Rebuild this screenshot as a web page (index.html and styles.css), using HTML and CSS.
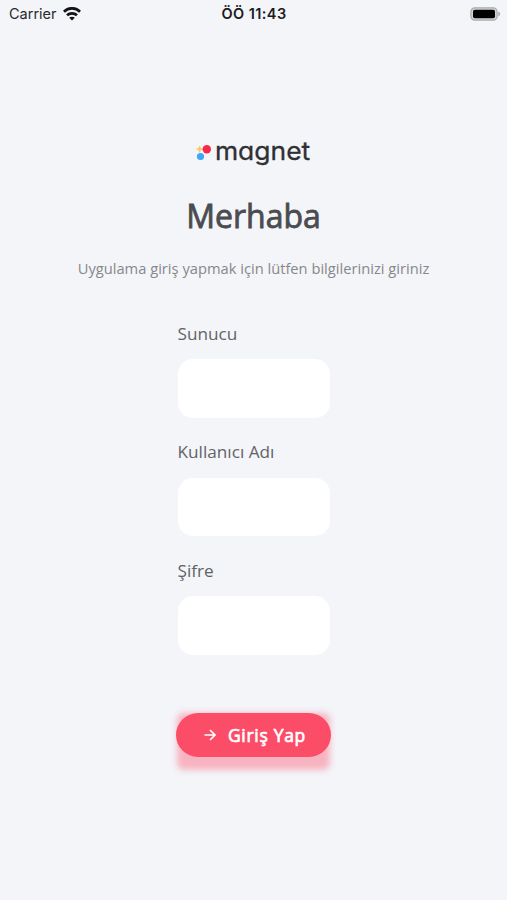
FILE: index.html
```html
<!DOCTYPE html>
<html lang="tr">
<head>
<meta charset="utf-8">
<meta name="viewport" content="width=device-width, initial-scale=1">
<title>Magnet</title>
<link rel="stylesheet" href="styles.css">
</head>
<body>
<header class="status">
  <div class="status-left">
    <span class="carrier">Carrier</span>
    <svg class="wifi" width="18" height="14" viewBox="0 0 18 14" fill="none" stroke="#141416" stroke-width="2.7">
      <path d="M.9 4.7C5.4.2 12.6.2 17.1 4.7"/>
      <path d="M4 8.3c2.8-2.7 7.2-2.7 10 0"/>
      <path d="M9 13.6 6.2 10.7c1.6-1.4 4-1.4 5.6 0z" fill="#141416" stroke="none"/>
    </svg>
  </div>
  <span class="time">ÖÖ 11:43</span>
  <svg class="battery" width="31" height="14" viewBox="0 0 31 14">
    <rect x=".9" y=".9" width="26.2" height="12.2" rx="3.8" fill="#d4d4d7" stroke="#a9a9ac" stroke-width="1.2"/>
    <rect x="3" y="2.8" width="22" height="8.4" rx="1.8" fill="#000"/>
    <path d="M28.4 4.6c2.3.8 2.3 4 0 4.8z" fill="#a9a9ac"/>
  </svg>
</header>
<main class="login">
  <svg class="logo" width="116" height="34" viewBox="0 0 116 34">
    <path d="M3.6 6.4 4.8 9l2.7 1.1-2.7 1.2-1.2 2.6-1.2-2.6L-.3 10.1 2.4 9z" fill="#ffc65c"/>
    <circle cx="10.8" cy="10.2" r="4.2" fill="#fb2748"/>
    <circle cx="4.5" cy="17.5" r="3.6" fill="#3fa7f5"/>
    <text class="wordmark" x="18.9" y="20.6" textLength="95.4" lengthAdjust="spacingAndGlyphs">magnet</text>
  </svg>
  <h1 class="title">Merhaba</h1>
  <p class="subtitle">Uygulama giriş yapmak için lütfen bilgilerinizi giriniz</p>
  <form class="form">
    <label class="field"><span class="label">Sunucu</span><input class="input" type="text"></label>
    <label class="field"><span class="label">Kullanıcı Adı</span><input class="input" type="text"></label>
    <label class="field"><span class="label">Şifre</span><input class="input" type="password"></label>
    <button class="submit" type="button">
      <svg width="12" height="12" viewBox="0 0 12 12" fill="none" stroke="#fff" stroke-width="1.6"><path d="M.5 6h10M6 1l5 5-5 5"/></svg>
      <span class="submit-text">Giriş Yap</span>
    </button>
  </form>
</main>
</body>
</html>
```
FILE: styles.css
```css
* { box-sizing: border-box; }
body {
  margin: 0;
  height: 900px;
  overflow: hidden;
  background: #f3f5f9;
  font-family: "Open Sans", sans-serif;
}
.status {
  display: grid;
  grid-template-columns: 1fr auto 1fr;
  align-items: center;
  height: 27px;
  padding: 0 6px 0 9px;
  font-family: Inter, sans-serif;
  font-size: 14.5px;
  color: #29292c;
}
.status-left { display: flex; align-items: center; gap: 6px; }
.time { margin-left: -2px; font-weight: 600; letter-spacing: .42px; color: #1b1b1e; }
.battery { justify-self: end; }
.login {
  display: flex;
  flex-direction: column;
  align-items: center;
}
.logo { margin-top: 112px; overflow: visible; }
.wordmark {
  font: 400 25px Inter, sans-serif;
  font-feature-settings: "cv11" 1;
  fill: #303034;
  stroke: #303034;
  stroke-width: .3px;
  stroke-linejoin: round;
}
.title {
  margin: 21px 0 0;
  height: 44px;
  line-height: 44px;
  font-size: 32px;
  font-weight: 400;
  color: #4b4c4f;
  -webkit-text-stroke: .8px #4b4c4f;
}
.subtitle {
  margin: 20px 0 0;
  height: 20px;
  line-height: 20px;
  font-size: 14.7px;
  color: #87888b;
  white-space: nowrap;
}
.form { width: 152px; margin-top: 43.5px; }
.field { display: block; height: 118.5px; }
.label {
  display: block;
  height: 23px;
  line-height: 23px;
  font-size: 17.2px;
  color: #626367;
  white-space: nowrap;
}
.input {
  display: block;
  width: 152px;
  height: 58.5px;
  margin-top: 14.5px;
  padding: 0 14px;
  border: 0;
  border-radius: 15px;
  background: #fff;
  font: inherit;
}
.submit {
  display: flex;
  align-items: center;
  justify-content: center;
  gap: 12px;
  width: 155px;
  height: 44px;
  margin: 36px 0 0 -1.3px;
  padding: 0 0 0 2.5px;
  border: 0;
  border-radius: 22px;
  background: #fb4c68;
  color: #fff;
  font: 400 17.5px/24px "Open Sans", sans-serif;
  letter-spacing: .7px;
  position: relative;
}
.submit::before {
  content: "";
  position: absolute;
  z-index: -1;
  inset: 0 1px -13px;
  border-radius: 7px;
  background: #f8b3c0;
  filter: blur(3px);
}
.submit-text { -webkit-text-stroke: .7px #fff; white-space: nowrap; }
```
